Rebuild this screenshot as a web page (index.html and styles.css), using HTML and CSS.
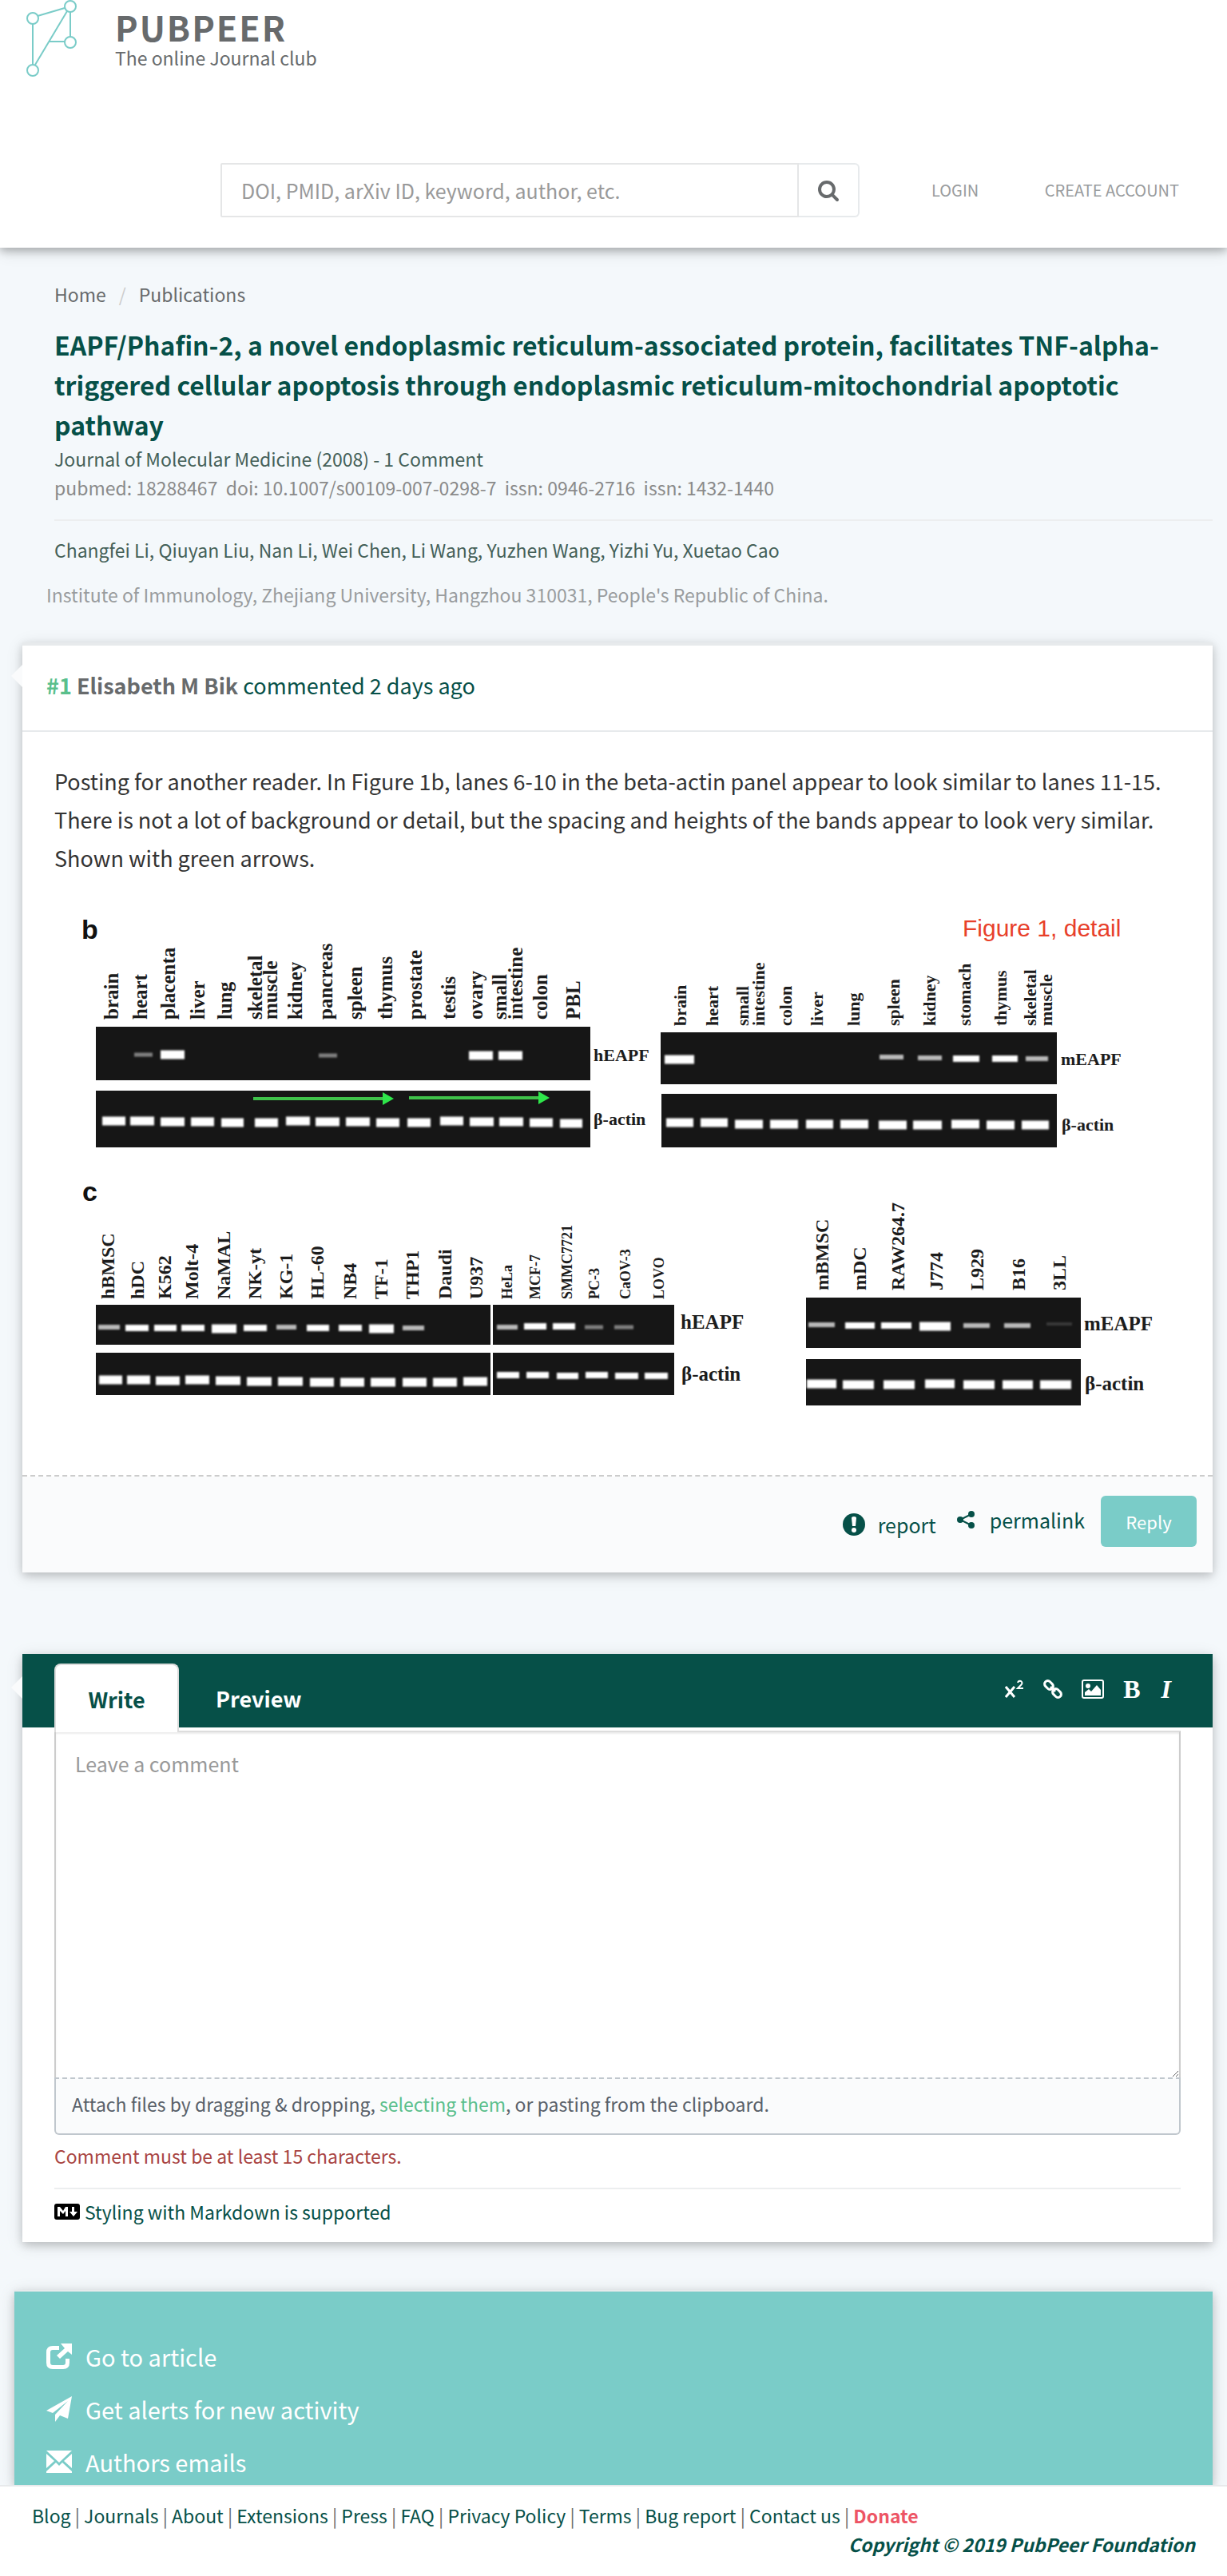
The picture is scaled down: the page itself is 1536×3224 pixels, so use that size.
FILE: index.html
```html
<!DOCTYPE html>
<html lang="en">
<head>
<meta charset="utf-8">
<title>PubPeer - EAPF/Phafin-2, a novel endoplasmic reticulum-associated protein</title>
<link rel="stylesheet" href="styles.css">
</head>
<body>
<header class="site-header">
  <a class="brand" href="#">
    <svg class="brand-mark" viewBox="0 0 64 96" aria-hidden="true">
      <g fill="none" stroke="#7accc8" stroke-width="2">
        <path d="M15 20 49 10M56 15v31M52 14 12 81M9 30v51M30 52h19"/>
        <circle cx="56" cy="8" r="7"/><circle cx="9" cy="23" r="7"/><circle cx="56" cy="53" r="7"/><circle cx="9" cy="88" r="7"/>
      </g>
    </svg>
    <span class="brand-text">
      <span class="brand-name">PUBPEER</span>
      <span class="brand-tagline">The online Journal club</span>
    </span>
  </a>
  <div class="toolbar">
    <form class="search">
      <input class="search-input" type="text" aria-label="Search publications" placeholder="DOI, PMID, arXiv ID, keyword, author, etc.">
      <button class="search-button" type="button" aria-label="Search">
        <svg width="28" height="28" viewBox="0 0 1792 1792" aria-hidden="true"><path fill="#676a6c" d="M1216 832q0-185-131.500-316.500T768 384 451.500 515.500 320 832t131.500 316.500T768 1280t316.500-131.500T1216 832zm512 832q0 52-38 90t-90 38q-54 0-90-38l-343-342q-179 124-399 124-143 0-273.500-55.500t-225-150-150-225T64 832t55.500-273.500 150-225 225-150T768 128t273.500 55.500 225 150 150 225T1472 832q0 220-124 399l343 343q37 37 37 90z"/></svg>
      </button>
    </form>
    <nav class="account">
      <a href="#">LOGIN</a>
      <a href="#">CREATE ACCOUNT</a>
    </nav>
  </div>
</header>

<main class="page">
  <section class="publication">
    <nav class="breadcrumb"><a href="#">Home</a><span class="slash">/</span><a href="#">Publications</a></nav>
    <h1 class="title">EAPF/Phafin-2, a novel endoplasmic reticulum-associated protein, facilitates TNF-alpha-triggered cellular apoptosis through endoplasmic reticulum-mitochondrial apoptotic pathway</h1>
    <p class="journal">Journal of Molecular Medicine (2008) - 1 Comment</p>
    <p class="ids">pubmed: 18288467 &nbsp;doi: 10.1007/s00109-007-0298-7 &nbsp;issn: 0946-2716 &nbsp;issn: 1432-1440</p>
    <hr class="rule">
    <p class="authors">Changfei Li, Qiuyan Liu, Nan Li, Wei Chen, Li Wang, Yuzhen Wang, Yizhi Yu, Xuetao Cao</p>
    <p class="affiliation">Institute of Immunology, Zhejiang University, Hangzhou 310031, People's Republic of China.</p>
  </section>

  <article class="card comment">
    <h2 class="comment-head"><span class="number">#1</span> <strong>Elisabeth M Bik</strong> <a href="#">commented 2 days ago</a></h2>
    <div class="comment-body">
      <p>Posting for another reader. In Figure 1b, lanes 6-10 in the beta-actin panel appear to look similar to lanes 11-15. There is not a lot of background or detail, but the spacing and heights of the bands appear to look very similar. Shown with green arrows.</p>
      <svg class="figure" viewBox="68 1120 1410 680" role="img" aria-label="Figure 1, detail">
        <g class="panel">
          <path d="M120 1285h619v67h-619zM120 1365h619v71h-619z"/>
          <path d="M827 1292h496v65h-496zM828 1369h495v67h-495z"/>
          <path d="M120 1633h494v50h-494zM617 1633h227v50h-227zM120 1693h494v53h-494zM617 1693h227v53h-227z"/>
          <path d="M1009 1624h344v63h-344zM1009 1701h344v58h-344z"/>
        </g>
        <g class="band" stroke-width="11">
          <path d="M201 1320h30M587 1321h30M624 1321h30M832 1326h37M265 1663h31M462 1663h31M1151 1660h39"/>
          <path d="M128 1403h29M163 1403h30M201 1404h30M239 1404h29M277 1405h28M319 1405h29M358 1403h30M395 1404h30M433 1404h30M471 1405h29M510 1405h29M551 1403h29M588 1404h30M625 1404h30M663 1405h29M701 1406h28"/>
          <path d="M834 1405h34M877 1405h34M920 1407h35M964 1407h35M1009 1407h34M1052 1407h35M1100 1408h35M1143 1408h36M1191 1407h35M1235 1408h35M1279 1408h34"/>
          <path d="M124 1727h29M159 1727h29M195 1728h30M232 1727h30M270 1728h31M309 1729h31M348 1729h31M388 1730h30M426 1730h30M464 1730h31M504 1730h30M542 1730h30M580 1729h30"/>
          <path d="M1010 1732h37M1055 1733h39M1106 1733h39M1158 1732h37M1206 1733h39M1255 1733h38M1302 1733h39"/>
        </g>
        <g class="band" stroke-width="8">
          <path d="M1193 1325h33M1242 1325h32M157 1662h29M193 1662h28M227 1662h29M305 1662h29M384 1662h28M424 1662h29M656 1660h28M692 1660h28M1058 1659h37M1103 1659h38"/>
          <path d="M622 1721h28M659 1721h28M697 1722h27M733 1721h28M770 1722h29M807 1722h29"/>
        </g>
        <g class="band" stroke-width="6" opacity=".7">
          <path d="M1101 1323h30M1149 1324h30M1284 1325h28M123 1661h27M346 1661h25M504 1662h27M622 1661h26M1012 1658h33M1206 1659h33M1257 1659h33"/>
        </g>
        <g class="band" stroke-width="5" opacity=".45"><path d="M168 1320h23M399 1321h23M732 1661h23M769 1661h24"/></g>
        <g class="band" stroke-width="4" opacity=".15"><path d="M1310 1657h32"/></g>
        <g class="arrow">
          <path fill="none" stroke-width="4" d="M317 1375h163M512 1374h163"/>
          <path stroke="none" d="M479 1367l14 8-14 8zM674 1366l14 8-14 8z"/>
        </g>
        <g class="letter"><text x="102" y="1175">b</text><text x="103" y="1503">c</text></g>
        <text class="caption" x="1205" y="1172">Figure 1, detail</text>
        <g class="label label-lg">
          <text transform="translate(148 1276) rotate(-90)">brain</text>
          <text transform="translate(184 1276) rotate(-90)">heart</text>
          <text transform="translate(219 1276) rotate(-90)">placenta</text>
          <text transform="translate(256 1276) rotate(-90)">liver</text>
          <text transform="translate(290 1276) rotate(-90)">lung</text>
          <text transform="translate(328 1276) rotate(-90)">skeletal</text>
          <text transform="translate(347 1276) rotate(-90)">muscle</text>
          <text transform="translate(378 1276) rotate(-90)">kidney</text>
          <text transform="translate(416 1276) rotate(-90)">pancreas</text>
          <text transform="translate(453 1276) rotate(-90)">spleen</text>
          <text transform="translate(491 1276) rotate(-90)">thymus</text>
          <text transform="translate(528 1276) rotate(-90)">prostate</text>
          <text transform="translate(570 1276) rotate(-90)">testis</text>
          <text transform="translate(604 1276) rotate(-90)">ovary</text>
          <text transform="translate(634 1276) rotate(-90)">small</text>
          <text transform="translate(654 1276) rotate(-90)">intestine</text>
          <text transform="translate(685 1276) rotate(-90)">colon</text>
          <text transform="translate(726 1276) rotate(-90)">PBL</text>
        </g>
        <g class="label label-md">
          <text transform="translate(859 1284) rotate(-90)">brain</text>
          <text transform="translate(899 1284) rotate(-90)">heart</text>
          <text transform="translate(937 1284) rotate(-90)">small</text>
          <text transform="translate(957 1284) rotate(-90)">intestine</text>
          <text transform="translate(991 1284) rotate(-90)">colon</text>
          <text transform="translate(1030 1284) rotate(-90)">liver</text>
          <text transform="translate(1076 1284) rotate(-90)">lung</text>
          <text transform="translate(1126 1284) rotate(-90)">spleen</text>
          <text transform="translate(1171 1284) rotate(-90)">kidney</text>
          <text transform="translate(1215 1284) rotate(-90)">stomach</text>
          <text transform="translate(1260 1284) rotate(-90)">thymus</text>
          <text transform="translate(1297 1284) rotate(-90)">skeletal</text>
          <text transform="translate(1317 1284) rotate(-90)">muscle</text>
          <text x="743" y="1328">hEAPF</text><text x="743" y="1408">β-actin</text>
          <text x="1328" y="1333">mEAPF</text><text x="1329" y="1415">β-actin</text>
        </g>
        <g class="label label-cell">
          <text transform="translate(143 1626) rotate(-90)">hBMSC</text>
          <text transform="translate(180 1626) rotate(-90)">hDC</text>
          <text transform="translate(214 1626) rotate(-90)">K562</text>
          <text transform="translate(248 1626) rotate(-90)">Molt-4</text>
          <text transform="translate(288 1626) rotate(-90)">NaMAL</text>
          <text transform="translate(327 1626) rotate(-90)">NK-yt</text>
          <text transform="translate(366 1626) rotate(-90)">KG-1</text>
          <text transform="translate(405 1626) rotate(-90)">HL-60</text>
          <text transform="translate(446 1626) rotate(-90)">NB4</text>
          <text transform="translate(485 1626) rotate(-90)">TF-1</text>
          <text transform="translate(524 1626) rotate(-90)">THP1</text>
          <text transform="translate(565 1626) rotate(-90)">Daudi</text>
          <text transform="translate(604 1626) rotate(-90)">U937</text>
          <text transform="translate(1037 1615) rotate(-90)">mBMSC</text>
          <text transform="translate(1084 1615) rotate(-90)">mDC</text>
          <text transform="translate(1132 1615) rotate(-90)">RAW264.7</text>
          <text transform="translate(1180 1615) rotate(-90)">J774</text>
          <text transform="translate(1231 1615) rotate(-90)">L929</text>
          <text transform="translate(1283 1615) rotate(-90)">B16</text>
          <text transform="translate(1334 1615) rotate(-90)">3LL</text>
        </g>
        <g class="label label-sm">
          <text transform="translate(641 1626) rotate(-90)">HeLa</text>
          <text transform="translate(676 1626) rotate(-90)">MCF-7</text>
          <text transform="translate(716 1626) rotate(-90)">SMMC7721</text>
          <text transform="translate(750 1626) rotate(-90)">PC-3</text>
          <text transform="translate(789 1626) rotate(-90)">CaOV-3</text>
          <text transform="translate(831 1626) rotate(-90)">LOVO</text>
        </g>
        <g class="label label-lg">
          <text x="852" y="1663">hEAPF</text><text x="853" y="1728">β-actin</text>
          <text x="1357" y="1665">mEAPF</text><text x="1358" y="1740">β-actin</text>
        </g>
      </svg>
    </div>
    <div class="comment-actions">
      <a class="action report" href="#">
        <svg width="28" height="28" viewBox="0 0 28 28" aria-hidden="true"><circle cx="14" cy="14" r="14" fill="#065048"/><path fill="#fff" d="M11 6q0-2 3-2t3 2l-1 10h-4z"/><circle cx="14" cy="21" r="3" fill="#fff"/></svg>
        report
      </a>
      <a class="action permalink" href="#">
        <svg width="22" height="22" viewBox="0 0 22 22" aria-hidden="true"><g fill="#065048"><path d="M18 4 4 11l14 7" fill="none" stroke="#065048" stroke-width="2"/><circle cx="18" cy="4" r="4"/><circle cx="4" cy="11" r="4"/><circle cx="18" cy="18" r="4"/></g></svg>
        permalink
      </a>
      <button class="reply" type="button">Reply</button>
    </div>
  </article>

  <section class="card editor">
    <div class="editor-bar">
      <button class="tab tab-active" type="button">Write</button>
      <button class="tab" type="button">Preview</button>
      <div class="format">
        <button type="button" aria-label="Superscript"><svg width="24" height="24" viewBox="0 0 24 24"><g fill="none" stroke="#fff" stroke-width="3"><path d="M1 9l11 13M12 9L1 22"/><path stroke-width="2" d="M16 4q1-3 4-2 3 2 0 5l-4 4h7"/></g></svg></button>
        <button type="button" aria-label="Link"><svg width="24" height="24" viewBox="0 0 24 24"><g fill="none" stroke="#fff" stroke-width="3"><rect x="-6" y="-4" width="12" height="8" rx="4" transform="translate(7 7) rotate(45)"/><rect x="-6" y="-4" width="12" height="8" rx="4" transform="translate(17 17) rotate(45)"/><path d="M9 9l6 6"/></g></svg></button>
        <button type="button" aria-label="Image"><svg width="28" height="24" viewBox="0 0 28 24"><rect x="1" y="1" width="26" height="22" rx="2" fill="none" stroke="#fff" stroke-width="2"/><circle cx="8" cy="8" r="3" fill="#fff"/><path fill="#fff" d="M4 20v-4l5-4 3 3 7-8 5 6v7z"/></svg></button>
        <button type="button" class="bold">B</button>
        <button type="button" class="italic">I</button>
      </div>
    </div>
    <div class="editor-body">
      <textarea class="textarea" aria-label="Comment" placeholder="Leave a comment"></textarea>
      <div class="attach">Attach files by dragging &amp; dropping, <a href="#">selecting them</a>, or pasting from the clipboard.</div>
      <p class="error">Comment must be at least 15 characters.</p>
      <hr class="rule">
      <a class="markdown" href="#">
        <svg width="32" height="20" viewBox="0 0 32 20" aria-hidden="true"><rect width="32" height="20" rx="3"/><path fill="#fff" d="M4 16V4h3l4 5 3-5h3v12h-3V9l-3 4-4-4v7zM22 4h3v6h4l-5 6-5-6h3z"/></svg>
        Styling with Markdown is supported
      </a>
    </div>
  </section>

  <aside class="links">
    <a href="#"><svg width="32" height="32" viewBox="0 0 32 32" aria-hidden="true"><path fill="none" stroke="#fff" stroke-width="5" d="M16 5.500H8Q2.500 5.500 2.500 11v13q0 5.500 5.500 5.500h13q5.500 0 5.500-5.500v-5"/><path fill="#fff" d="M18 0h14v14l-5-4-10 9-4-4 10-9z"/></svg>Go to article</a>
    <a href="#"><svg width="32" height="32" viewBox="0 0 32 32" aria-hidden="true"><path fill="#fff" d="M32 0 27 28l-10-4-6 8v-9L27 6 8 21l-8-3z"/></svg>Get alerts for new activity</a>
    <a href="#"><svg width="32" height="28" viewBox="0 0 32 28" aria-hidden="true"><path fill="#fff" d="M0 0h32L16 15zM0 4l10 9L0 22zM32 4l-10 9 10 9zM12 15l4 4 4-4 12 11v2H0v-2z"/></svg>Authors emails</a>
  </aside>
</main>

<footer class="site-footer">
  <nav><a href="#">Blog</a> | <a href="#">Journals</a> | <a href="#">About</a> | <a href="#">Extensions</a> | <a href="#">Press</a> | <a href="#">FAQ</a> | <a href="#">Privacy Policy</a> | <a href="#">Terms</a> | <a href="#">Bug report</a> | <a href="#">Contact us</a> | <a class="donate" href="#">Donate</a></nav>
  <p class="copyright">Copyright © 2019 PubPeer Foundation</p>
</footer>
</body>
</html>
```
FILE: styles.css
```css
* { box-sizing: border-box; }

body {
  margin: 0;
  background: #f4f8fb;
  color: #676a6c;
  font-family: "Noto Sans CJK SC", "Open Sans", sans-serif;
  font-size: 23px;
  line-height: 36px;
}

a { color: #065048; text-decoration: none; }
p, h1, h2 { margin: 0; }
svg { display: block; flex: none; }
button, input, textarea { font-family: inherit; margin: 0; }

.rule { margin: 22px 0 0; border: 0; border-top: 2px solid #eceeef; }

/* Header */
.site-header {
  position: relative;
  padding-bottom: 38px;
  background: #fff;
  box-shadow: 0 4px 10px rgba(0, 0, 0, .24), 0 4px 20px rgba(0, 0, 0, .14);
}
.brand { display: flex; gap: 48px; padding-left: 32px; color: #676a6c; }
.brand-mark { width: 64px; height: 96px; }
.brand-text { display: flex; flex-direction: column; gap: 4px; padding-top: 12px; }
.brand-name { font-size: 43px; line-height: 42px; font-weight: 700; letter-spacing: 2px; }
.brand-tagline { font-size: 23px; line-height: 28px; }

.toolbar { display: flex; align-items: center; padding: 108px 60px 0 276px; }
.search { display: flex; flex: 0 1 800px; height: 68px; }
.search-input {
  flex: 1;
  min-width: 0;
  padding: 0 24px;
  border: 2px solid #e5e6e7;
  border-radius: 2px 0 0 2px;
  background: #fff;
  font-size: 25px;
}
.search-input::placeholder, .textarea::placeholder { color: #999; opacity: 1; }
.search-button {
  display: flex;
  align-items: center;
  justify-content: center;
  width: 76px;
  border: 2px solid #e7eaec;
  border-left: 0;
  border-radius: 0 6px 6px 0;
  background: #fff;
}
.account { display: flex; flex: 1; justify-content: space-between; padding-left: 90px; white-space: nowrap; }
.account a { color: #999c9e; font-size: 20px; }

/* Publication */
.page { padding: 40px 18px 0; }
.publication { padding-left: 50px; }
.breadcrumb { display: flex; gap: 16px; margin-bottom: 20px; }
.breadcrumb a { color: #676a6c; }
.slash { color: #ccc; }
.title { color: #065048; font-size: 32px; line-height: 50px; font-weight: 700; }
.journal, .authors { color: #446058; }
.ids { color: #8a8a8a; }
.authors { margin-top: 18px; }
.affiliation { margin: 20px 0 0 -10px; color: #999c9e; }

/* Cards */
.card {
  position: relative;
  margin-left: 10px;
  background: #fff;
  box-shadow: 0 4px 10px rgba(0, 0, 0, .16), 0 4px 20px rgba(0, 0, 0, .12);
}
.card::before {
  content: "";
  position: absolute;
  top: 28px;
  left: -14px;
  border: 14px solid transparent;
  border-left-width: 0;
  border-right-color: #fafbfc;
}

/* Comment */
.comment { margin-top: 42px; border-top: 4px solid #e7eaec; }
.comment::before { top: 24px; }
.comment-head {
  padding: 26px 30px 32px;
  border-bottom: 2px solid #e7eaec;
  font-size: 27px;
  line-height: 48px;
  font-weight: 400;
}
.number { color: #5abf8c; font-weight: 700; }
.comment-body {
  padding: 38px 40px 46px;
  border-bottom: 2px dashed #ccc;
  color: #333;
  font-size: 27px;
  line-height: 48px;
}
.figure { width: 100%; height: auto; margin-top: 22px; }
.panel { fill: #161616; }
.band { fill: none; stroke: #fff; filter: blur(1px); }
.arrow { fill: #2ee64a; stroke: #3fc24a; }
.letter { fill: #111; font: bold 34px "Liberation Sans", sans-serif; }
.caption { fill: #e8402a; font: 30px "Liberation Sans", sans-serif; }
.label { fill: #1c1c1c; font-family: "Liberation Serif", serif; font-weight: 700; }
.label-lg { font-size: 25px; }
.label-cell { font-size: 24px; }
.label-md { font-size: 22px; }
.label-sm { font-size: 18px; }

.comment-actions {
  display: flex;
  align-items: center;
  justify-content: flex-end;
  padding: 24px 20px 32px;
  background: #fafbfc;
}
.action { display: flex; align-items: center; font-size: 25px; line-height: 44px; }
.report { gap: 16px; margin-right: 26px; padding-top: 8px; }
.permalink { gap: 19px; margin-right: 20px; padding-bottom: 4px; }
.reply {
  width: 120px;
  height: 64px;
  border: 0;
  border-radius: 6px;
  background: #7accc8;
  color: #fff;
  font-size: 22px;
}

/* Editor */
.editor { margin-top: 102px; }
.editor-bar { display: flex; align-items: flex-end; height: 92px; padding: 0 50px 0 40px; background: #065048; }
.tab {
  position: relative;
  height: 86px;
  margin-bottom: -6px;
  padding: 0 46px;
  border: 0;
  background: none;
  color: #fff;
  font-size: 27px;
  font-weight: 700;
}
.tab-active {
  z-index: 1;
  min-width: 156px;
  padding: 0 40px;
  border: 2px solid #ddd;
  border-bottom: 0;
  border-radius: 8px 8px 0 0;
  background: #fff;
  color: #065048;
}
.format { display: flex; align-items: center; gap: 24px; height: 92px; margin-left: auto; padding-bottom: 4px; }
.format button { padding: 0; border: 0; background: none; color: #fff; font: 32px/32px "Liberation Serif", serif; }
.format .bold { font-weight: 700; }
.format .italic { padding: 0 2px; font-style: italic; font-weight: 700; }

.editor-body { padding: 4px 40px 20px; }
.textarea {
  display: block;
  width: 100%;
  height: 434px;
  padding: 19px 24px;
  border: 2px solid #ccc;
  border-top-color: #ddd;
  border-bottom: 0;
  background: #fff;
  font-size: 25px;
  line-height: 40px;
  box-shadow: inset 0 2px 2px rgba(0, 0, 0, .08);
}
.attach {
  padding: 13px 20px 19px;
  border: 2px solid #c0c7cd;
  border-top-style: dashed;
  border-radius: 0 0 6px 6px;
  background: #fafbfc;
  color: #586069;
}
.attach a { color: #5abf8c; }
.error { margin-top: 8px; color: #a94442; }
.markdown { display: flex; align-items: center; gap: 6px; margin-top: 10px; }

/* Article links */
.links {
  display: flex;
  flex-direction: column;
  gap: 18px;
  margin-top: 60px;
  padding: 57px 40px 5px;
  border-top: 2px solid #e7eaec;
  background: #7accc8;
  box-shadow: 0 4px 10px rgba(0, 0, 0, .16), 0 4px 20px rgba(0, 0, 0, .12);
}
.links a { display: flex; align-items: center; gap: 17px; color: #fff; font-size: 29px; line-height: 48px; }

/* Footer */
.site-footer {
  position: relative;
  padding: 18px 40px 22px;
  border-top: 2px solid #e7eaec;
  background: #fff;
}
.donate { color: #ed5565; font-weight: 700; }
.copyright { color: #065048; font-style: italic; font-weight: 700; text-align: right; }
```
